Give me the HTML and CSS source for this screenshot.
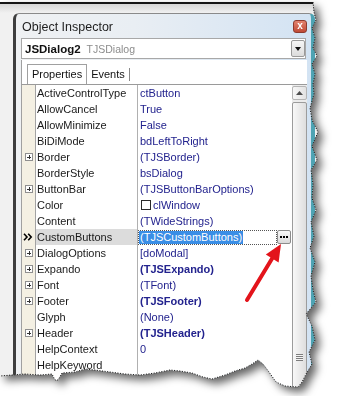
FILE: index.html
```html
<!DOCTYPE html>
<html lang="en">

<head>
    <meta charset="UTF-8">
    <meta name="viewport" content="width=device-width, initial-scale=1.0">
    <title>Object Inspector</title>
    <link rel="stylesheet" href="styles.css">
</head>

<body>

    <div class="shot">
        <div class="paper">
            <div class="window">
                <div class="titlebar">
                    <span class="title">Object Inspector</span>
                    <span class="close">x</span>
                </div>
                <div class="combo">
                    <span class="obj-name">JSDialog2</span>
                    <span class="obj-type">TJSDialog</span>
                    <span class="drop"></span>
                </div>
                <div class="tabs">
                    <span class="tab active">Properties</span>
                    <span class="tab">Events</span>
                </div>
                <div class="grid-wrap">
                    <div class="grid">
                        <div class="row"><span class="gut"></span><span class="name">ActiveControlType</span><span class="val">ctButton</span></div>
                        <div class="row"><span class="gut"></span><span class="name">AllowCancel</span><span class="val">True</span></div>
                        <div class="row"><span class="gut"></span><span class="name">AllowMinimize</span><span class="val">False</span></div>
                        <div class="row"><span class="gut"></span><span class="name">BiDiMode</span><span class="val">bdLeftToRight</span></div>
                        <div class="row"><span class="gut"><i class="plus"></i></span><span class="name">Border</span><span class="val">(TJSBorder)</span></div>
                        <div class="row"><span class="gut"></span><span class="name">BorderStyle</span><span class="val">bsDialog</span></div>
                        <div class="row"><span class="gut"><i class="plus"></i></span><span class="name">ButtonBar</span><span class="val">(TJSButtonBarOptions)</span></div>
                        <div class="row"><span class="gut"></span><span class="name">Color</span><span class="val"><i class="swatch"></i>clWindow</span></div>
                        <div class="row"><span class="gut"></span><span class="name">Content</span><span class="val">(TWideStrings)</span></div>
                        <div class="row selected">
                            <span class="gut">
                                <svg class="chevron" width="10" height="8" viewBox="0 0 10 8">
                                    <path d="M1 0.8 L4 4 L1 7.2 M5.2 0.8 L8.2 4 L5.2 7.2" fill="none" stroke="#000" stroke-width="1.6"/>
                                </svg>
                            </span>
                            <span class="name">CustomButtons</span>
                            <span class="val">
                                <span class="focus"><span class="sel">(TJSCustomButtons)</span></span>
                                <span class="ellipsis">
                                    <svg width="8" height="2" viewBox="0 0 8 2">
                                        <rect x="0" y="0" width="2" height="2" fill="#000"/>
                                        <rect x="3" y="0" width="2" height="2" fill="#000"/>
                                        <rect x="6" y="0" width="2" height="2" fill="#000"/>
                                    </svg>
                                </span>
                            </span>
                        </div>
                        <div class="row"><span class="gut"><i class="plus"></i></span><span class="name">DialogOptions</span><span class="val">[doModal]</span></div>
                        <div class="row"><span class="gut"><i class="plus"></i></span><span class="name">Expando</span><span class="val bold">(TJSExpando)</span></div>
                        <div class="row"><span class="gut"><i class="plus"></i></span><span class="name">Font</span><span class="val">(TFont)</span></div>
                        <div class="row"><span class="gut"><i class="plus"></i></span><span class="name">Footer</span><span class="val bold">(TJSFooter)</span></div>
                        <div class="row"><span class="gut"></span><span class="name">Glyph</span><span class="val">(None)</span></div>
                        <div class="row"><span class="gut"><i class="plus"></i></span><span class="name">Header</span><span class="val bold">(TJSHeader)</span></div>
                        <div class="row"><span class="gut"></span><span class="name">HelpContext</span><span class="val">0</span></div>
                        <div class="row"><span class="gut"></span><span class="name">HelpKeyword</span><span class="val"></span></div>
                        <div class="row"><span class="gut"></span><span class="name"></span><span class="val"></span></div>
                    </div>
                    <div class="scrollbar">
                        <div class="sb-up">
                            <svg width="7" height="4" viewBox="0 0 7 4"><path d="M0 4 L3.5 0 L7 4 Z" fill="#4d4d4d"/></svg>
                        </div>
                        <div class="sb-thumb"><span class="grip"></span></div>
                    </div>
                </div>
            </div>
        </div>
    </div>

    <!-- torn edge outline and the red pointer arrow -->
    <svg class="overlay" width="340" height="396" viewBox="0 0 340 396">
        <polyline class="torn" points="313,2 314,12 316,20 312,28 315,38 313,48 317,56 312,64 315,74 313,84 314,94 310,108 312,120 318,132 312,146 317,160 311,170 313,184 312,198 316,210 311,222 314,236 310,248 315,262 311,276 313,290 316,302 306,314 312,326 315,340 309,352 312,364 306,374 302,382 298,387 285,386 276,382 269,372 263,364 258,360 252,364 245,368 235,371 225,375 212,379 203,377 192,373 180,371 170,370 155,373 140,375 125,374 110,372 95,370 85,369 75,372 62,373 58,380 55,380 52,374 40,375 25,374 12,375 0,376"/>
        <line x1="247" y1="300" x2="273" y2="257" stroke="#e3141b" stroke-width="4" stroke-linecap="round"/>
        <polygon points="281,244 278.6,262.4 265.8,254.6" fill="#e3141b"/>
    </svg>

</body>

</html>
```

FILE: styles.css
```css
body {
    margin: 0;
    width: 340px;
    height: 396px;
    overflow: hidden;
    position: relative;
    background: #ffffff;
    font-family: 'Liberation Sans', Arial, sans-serif;
}

.shot {
    filter: drop-shadow(5px 5px 4px rgba(0, 0, 0, 0.6));
}

.paper {
    height: 396px;
    overflow: hidden;
    box-sizing: border-box;
    padding: 13px 0 0 13px;
    background: linear-gradient(#ffffff 0 2px, #151515 2px 4px, #d6d6d6 4px, #f1f1f1 13px);
    clip-path: polygon(0px 2px, 313px 2px, 314px 12px, 316px 20px, 312px 28px, 315px 38px, 313px 48px, 317px 56px, 312px 64px, 315px 74px, 313px 84px, 314px 94px, 310px 108px, 312px 120px, 318px 132px, 312px 146px, 317px 160px, 311px 170px, 313px 184px, 312px 198px, 316px 210px, 311px 222px, 314px 236px, 310px 248px, 315px 262px, 311px 276px, 313px 290px, 316px 302px, 306px 314px, 312px 326px, 315px 340px, 309px 352px, 312px 364px, 306px 374px, 302px 382px, 298px 387px, 285px 386px, 276px 382px, 269px 372px, 263px 364px, 258px 360px, 252px 364px, 245px 368px, 235px 371px, 225px 375px, 212px 379px, 203px 377px, 192px 373px, 180px 371px, 170px 370px, 155px 373px, 140px 375px, 125px 374px, 110px 372px, 95px 370px, 85px 369px, 75px 372px, 62px 373px, 58px 380px, 55px 380px, 52px 374px, 40px 375px, 25px 374px, 12px 375px, 0px 376px);
}

.window {
    width: 302px;
    height: 383px;
    overflow: hidden;
    box-sizing: border-box;
    padding: 0 4px 0 5px;
    border-top: 1px solid #8a8a8a;
    border-left: 3px solid #3e3e3e;
    border-right: 4px solid #4ea3b3;
    border-radius: 6px 6px 0 0;
    background: linear-gradient(to right, #eff1f3 0%, #e9eef3 40%, #d3e3f3 100%);
}

.titlebar {
    height: 23px;
    display: flex;
    align-items: center;
    justify-content: space-between;
    padding-left: 1px;
}

.title {
    font-size: 12.5px;
    color: #1e1e1e;
    padding-top: 2px;
}

.close {
    width: 14px;
    height: 13px;
    box-sizing: border-box;
    margin-top: 1px;
    border: 1px solid #8d3a2e;
    border-radius: 3px;
    background: linear-gradient(#e3836f, #c04a36);
    color: #ffffff;
    font-size: 10px;
    font-weight: 700;
    line-height: 10px;
    text-align: center;
}

.combo {
    margin-top: 1px;
    margin-right: 1px;
    height: 21px;
    box-sizing: border-box;
    border: 1px solid #a8a8a8;
    background: #ffffff;
    display: flex;
    align-items: center;
    padding-left: 3px;
}

.obj-name {
    font-size: 11.5px;
    font-weight: 700;
    color: #111111;
}

.obj-type {
    font-size: 10.5px;
    color: #8c8c8c;
    margin-left: 6px;
}

.drop {
    margin-left: auto;
    width: 14px;
    height: 17px;
    box-sizing: border-box;
    border: 1px solid #9a9a9a;
    border-radius: 2px;
    background: linear-gradient(#f6f6f6, #dcdcdc);
    position: relative;
}

.drop::after {
    content: "";
    position: absolute;
    left: 3px;
    top: 6px;
    border-left: 3.5px solid transparent;
    border-right: 3.5px solid transparent;
    border-top: 4px solid #111111;
}

.tabs {
    margin-top: 1px;
    height: 25px;
    box-sizing: border-box;
    background: #ffffff;
    border-left: 1px solid #a0a0a0;
    border-bottom: 1px solid #9a9a9a;
    display: flex;
    align-items: flex-end;
    padding-left: 5px;
}

.tab {
    font-size: 11px;
    color: #111111;
    line-height: 19px;
    height: 19px;
    padding: 0 4px;
    position: relative;
}

.tab.active {
    border: 1px solid #a0a0a0;
    border-bottom: none;
    height: 19px;
}

.tab:last-child::after {
    content: "";
    position: absolute;
    right: -1px;
    top: 3px;
    height: 13px;
    border-right: 1px solid #888888;
}

.grid-wrap {
    display: flex;
    border-left: 1px solid #a0a0a0;
    background: #ffffff;
}

.grid {
    width: 270px;
}

.row {
    display: grid;
    grid-template-columns: 14px 102px 154px;
    height: 16px;
    font-size: 11px;
    line-height: 16px;
}

.gut {
    background: #f4f0e3;
    border-right: 1px solid #a3a3a3;
    display: flex;
    align-items: center;
    padding-left: 2px;
}

.name {
    border-right: 1px solid #b0b0b0;
    padding-left: 1px;
    color: #1a1a1a;
    white-space: nowrap;
    overflow: hidden;
}

.val {
    padding-left: 2px;
    color: #23238e;
    white-space: nowrap;
    display: flex;
    align-items: center;
}

.val.bold {
    font-weight: 700;
}

.plus {
    display: block;
    width: 6px;
    height: 6px;
    margin-left: 1px;
    border: 1px solid #8f8f8f;
    background: #ffffff;
    position: relative;
}

.plus::before {
    content: "";
    position: absolute;
    left: 1px;
    top: 2.5px;
    width: 4px;
    height: 1px;
    background: #333333;
}

.plus::after {
    content: "";
    position: absolute;
    left: 2.5px;
    top: 1px;
    width: 1px;
    height: 4px;
    background: #333333;
}

.swatch {
    display: block;
    width: 10px;
    height: 10px;
    box-sizing: border-box;
    border: 1px solid #2a2a2a;
    background: #ffffff;
    margin: 0 2px 0 1px;
}

.selected .gut {
    padding-left: 1px;
}

.selected .name {
    background: #dcdcdc;
}

.selected .val {
    padding-left: 0;
}

.focus {
    flex: 1;
    height: 15px;
    box-sizing: border-box;
    border: 1px dotted #555555;
    display: flex;
    align-items: center;
    padding-left: 0;
}

.sel {
    background: #3a8ee6;
    color: #ffffff;
    line-height: 13px;
    padding: 0 1px;
}

.ellipsis {
    width: 14px;
    height: 14px;
    box-sizing: border-box;
    margin: 0 1px 0 0;
    border: 1px solid #8c8c8c;
    border-radius: 2px;
    background: linear-gradient(#f8f8f8, #dadada);
    display: flex;
    align-items: center;
    justify-content: center;
}

.scrollbar {
    width: 15px;
    background: #ececec;
    padding-top: 1px;
}

.sb-up {
    height: 14px;
    box-sizing: border-box;
    border: 1px solid #b5b5b5;
    border-radius: 2px;
    background: linear-gradient(to right, #f7f7f7, #e2e2e2);
    display: flex;
    align-items: center;
    justify-content: center;
}

.sb-thumb {
    margin-top: 2px;
    height: 510px;
    box-sizing: border-box;
    border: 1px solid #9c9c9c;
    border-radius: 2px;
    background: linear-gradient(to right, #f8f8f8, #dedede);
    display: flex;
    align-items: center;
    justify-content: center;
}

.grip {
    width: 7px;
    height: 7px;
    background: repeating-linear-gradient(#7d7d7d 0 1px, #f4f4f4 1px 2px);
}

.overlay {
    position: absolute;
    top: 0;
    left: 0;
    pointer-events: none;
}

.torn {
    fill: none;
    stroke: #1e1e1e;
    stroke-width: 1;
    stroke-dasharray: 1.2 1.4;
}
```
